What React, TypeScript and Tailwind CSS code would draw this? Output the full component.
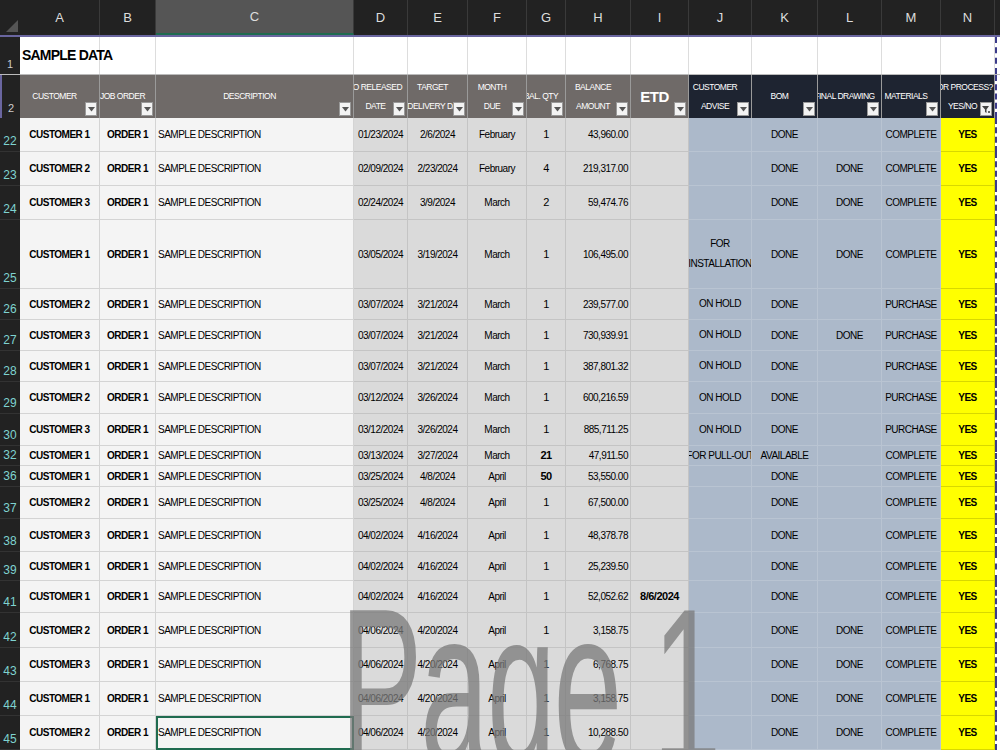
import React from "react";

const cols = "grid grid-cols-[20px_80px_56px_198px_54px_60px_59px_39px_65px_58px_63px_66px_64px_59px_54px_5px]";

type R = [string, number, string, string, string, string, string, string, string, string, string, string, string, string];
const rows: R[] = [
  ["22", 34, "CUSTOMER 1", "ORDER 1", "01/23/2024", "2/6/2024", "February", "1", "43,960.00", "", "", "DONE", "", "COMPLETE"],
  ["23", 34, "CUSTOMER 2", "ORDER 1", "02/09/2024", "2/23/2024", "February", "4", "219,317.00", "", "", "DONE", "DONE", "COMPLETE"],
  ["24", 34, "CUSTOMER 3", "ORDER 1", "02/24/2024", "3/9/2024", "March", "2", "59,474.76", "", "", "DONE", "DONE", "COMPLETE"],
  ["25", 69, "CUSTOMER 1", "ORDER 1", "03/05/2024", "3/19/2024", "March", "1", "106,495.00", "", "FOR\nINSTALLATION", "DONE", "DONE", "COMPLETE"],
  ["26", 31, "CUSTOMER 2", "ORDER 1", "03/07/2024", "3/21/2024", "March", "1", "239,577.00", "", "ON HOLD", "DONE", "", "PURCHASE"],
  ["27", 31, "CUSTOMER 3", "ORDER 1", "03/07/2024", "3/21/2024", "March", "1", "730,939.91", "", "ON HOLD", "DONE", "DONE", "PURCHASE"],
  ["28", 31, "CUSTOMER 1", "ORDER 1", "03/07/2024", "3/21/2024", "March", "1", "387,801.32", "", "ON HOLD", "DONE", "", "PURCHASE"],
  ["29", 32, "CUSTOMER 2", "ORDER 1", "03/12/2024", "3/26/2024", "March", "1", "600,216.59", "", "ON HOLD", "DONE", "", "PURCHASE"],
  ["30", 32, "CUSTOMER 3", "ORDER 1", "03/12/2024", "3/26/2024", "March", "1", "885,711.25", "", "ON HOLD", "DONE", "", "PURCHASE"],
  ["32", 20, "CUSTOMER 1", "ORDER 1", "03/13/2024", "3/27/2024", "March", "21", "47,911.50", "", "FOR PULL-OUT", "AVAILABLE", "", "COMPLETE"],
  ["36", 21, "CUSTOMER 1", "ORDER 1", "03/25/2024", "4/8/2024", "April", "50", "53,550.00", "", "", "DONE", "", "COMPLETE"],
  ["37", 32, "CUSTOMER 2", "ORDER 1", "03/25/2024", "4/8/2024", "April", "1", "67,500.00", "", "", "DONE", "", "COMPLETE"],
  ["38", 33, "CUSTOMER 3", "ORDER 1", "04/02/2024", "4/16/2024", "April", "1", "48,378.78", "", "", "DONE", "", "COMPLETE"],
  ["39", 29, "CUSTOMER 1", "ORDER 1", "04/02/2024", "4/16/2024", "April", "1", "25,239.50", "", "", "DONE", "", "COMPLETE"],
  ["41", 32, "CUSTOMER 1", "ORDER 1", "04/02/2024", "4/16/2024", "April", "1", "52,052.62", "8/6/2024", "", "DONE", "", "COMPLETE"],
  ["42", 35, "CUSTOMER 2", "ORDER 1", "04/06/2024", "4/20/2024", "April", "1", "3,158.75", "", "", "DONE", "DONE", "COMPLETE"],
  ["43", 34, "CUSTOMER 3", "ORDER 1", "04/06/2024", "4/20/2024", "April", "1", "6,768.75", "", "", "DONE", "DONE", "COMPLETE"],
  ["44", 34, "CUSTOMER 1", "ORDER 1", "04/06/2024", "4/20/2024", "April", "1", "3,158.75", "", "", "DONE", "DONE", "COMPLETE"],
  ["45", 34, "CUSTOMER 2", "ORDER 1", "04/06/2024", "4/20/2024", "April", "1", "10,288.50", "", "", "DONE", "DONE", "COMPLETE"],
];

const Dd = ({ filter }: { filter?: boolean }) => (
  <span className="absolute right-[2px] bottom-[2px] w-[12px] h-[14px] bg-[#f3f3f3] border border-[#999] flex items-center justify-center">
    {filter ? (
      <svg width="9" height="9" viewBox="0 0 9 9"><path d="M0 1h7L4.5 4.5V8L3 7V4.5z" fill="#444" /><path d="M6 6l2 2M8 6l-2 2" stroke="#444" strokeWidth="0.8" /></svg>
    ) : (
      <svg width="7" height="5" viewBox="0 0 7 5"><path d="M0 0h7L3.5 4.5z" fill="#555" /></svg>
    )}
  </span>
);

const H = ({ t, bg, big, filter }: { t: React.ReactNode; bg: string; big?: boolean; filter?: boolean }) => (
  <div className={`relative ${bg} border-r border-[#9a9a9a] text-white flex items-center justify-center text-center leading-[19px] ${big ? "text-[15px] font-bold" : "text-[8.5px]"} tracking-[-0.5px] pr-[10px] overflow-hidden whitespace-nowrap`}>
    {t}
    <Dd filter={filter} />
  </div>
);

export default function App() {
  const letters = ["A", "B", "C", "D", "E", "F", "G", "H", "I", "J", "K", "L", "M", "N"];
  return (
    <div className="relative w-[1000px] h-[750px] overflow-hidden bg-[#222] text-black" style={{ fontFamily: "'Liberation Sans', Arial, sans-serif" }}>
      <div className={`${cols} h-[37px] bg-[#222] border-b-2 border-[#6a66a0]`}>
        <div className="relative"><span className="absolute right-[2px] bottom-[3px] w-0 h-0 border-l-[12px] border-l-transparent border-b-[12px] border-b-[#555]" /></div>
        {letters.map((l) => (
          <div key={l} className={`flex items-center justify-center text-[13px] text-[#ddd] border-r border-[#3a3a3a] ${l === "C" ? "bg-[#555] border-b-2 border-b-[#1f6b4f]" : ""}`}>{l}</div>
        ))}
        <div />
      </div>
      <div className={`${cols} h-[37px] bg-white`}>
        <div className="bg-[#222] text-[#ccc] text-[11px] flex items-end justify-center pb-[2px]">1</div>
        <div className="flex items-center text-[14px] font-bold tracking-[-0.8px] pl-[2px] border-r border-[#ddd] whitespace-nowrap">SAMPLE DATA</div>
        <div className="border-r border-[#ddd]" />
        <div className="border-r border-[#ddd]" />
        {Array.from({ length: 11 }).map((_, i) => <div key={i} className="border-r border-[#ddd]" />)}
        <div className="border-l-2 border-dashed border-[#3b3b8a]" />
      </div>
      <div className={`${cols} h-[44px] border-t border-[#bbb]`}>
        <div className="bg-[#222] text-[#ccc] text-[11px] flex items-end justify-center pb-[2px] border-l-2 border-[#6a66a0]">2</div>
        <H t="CUSTOMER" bg="bg-[#6f6a68]" />
        <H t="JOB ORDER" bg="bg-[#6f6a68]" />
        <H t="DESCRIPTION" bg="bg-[#6f6a68]" />
        <H t={<span>JO RELEASED<br />DATE</span>} bg="bg-[#6f6a68]" />
        <H t={<span>TARGET<br />DELIVERY DA</span>} bg="bg-[#6f6a68]" />
        <H t={<span>MONTH<br />DUE</span>} bg="bg-[#6f6a68]" />
        <H t="BAL. QTY" bg="bg-[#6f6a68]" />
        <H t={<span>BALANCE<br />AMOUNT</span>} bg="bg-[#6f6a68]" />
        <H t="ETD" bg="bg-[#6f6a68]" big />
        <H t={<span>CUSTOMER<br />ADVISE</span>} bg="bg-[#1e2431]" />
        <H t="BOM" bg="bg-[#1e2431]" />
        <H t="FINAL DRAWING" bg="bg-[#1e2431]" />
        <H t="MATERIALS" bg="bg-[#1e2431]" />
        <H t={<span>FOR PROCESS?<br />YES/NO</span>} bg="bg-[#1e2431]" filter />
        <div className="bg-white border-l-2 border-dashed border-[#3b3b8a]" />
      </div>
      {rows.map((r) => {
        const [num, h, cust, jo, d, e, f, g, hh, i, j, k, l, m] = r;
        const c = "flex items-center text-[10px] tracking-[-0.5px] whitespace-nowrap border-r border-b overflow-hidden";
        return (
          <div key={num} className={cols} style={{ height: h }}>
            <div className="bg-[#222] text-[#7fd3d0] text-[12px] flex items-end justify-center pb-[1px] border-b border-[#333]">{num}</div>
            <div className={`${c} bg-[#f4f4f4] border-[#d4d4d4] justify-center font-bold`}>{cust}</div>
            <div className={`${c} bg-[#f4f4f4] border-[#d4d4d4] justify-center font-bold`}>{jo}</div>
            <div className={`${c} bg-[#f4f4f4] border-[#d4d4d4] pl-[2px] text-[9px] ${num === "45" ? "outline-2 outline-[#1f6b4f] -outline-offset-2" : ""}`}>SAMPLE DESCRIPTION</div>
            <div className={`${c} bg-[#dadada] border-[#c4c4c4] justify-center text-[10.5px]`}>{d}</div>
            <div className={`${c} bg-[#dadada] border-[#c4c4c4] justify-center text-[10.5px]`}>{e}</div>
            <div className={`${c} bg-[#dadada] border-[#c4c4c4] justify-center text-[10.5px]`}>{f}</div>
            <div className={`${c} bg-[#dadada] border-[#c4c4c4] justify-center text-[11px] ${g.length > 1 ? "font-bold" : ""}`}>{g}</div>
            <div className={`${c} bg-[#dadada] border-[#c4c4c4] justify-end pr-[2px] text-[10.5px]`}>{hh}</div>
            <div className={`${c} bg-[#dadada] border-[#c4c4c4] justify-center text-[11px] font-bold`}>{i}</div>
            <div className={`${c} bg-[#acb9ca] border-[#b9c4d2] justify-center text-center text-[8.5px] whitespace-pre leading-[20px]`}>{j}</div>
            <div className={`${c} bg-[#acb9ca] border-[#b9c4d2] justify-center text-[9px]`}>{k}</div>
            <div className={`${c} bg-[#acb9ca] border-[#b9c4d2] justify-center text-[9px]`}>{l}</div>
            <div className={`${c} bg-[#acb9ca] border-[#b9c4d2] justify-center text-[9px]`}>{m}</div>
            <div className={`${c} bg-[#ffff00] border-[#d8d800] justify-center text-[9px] font-bold`}>YES</div>
            <div className="bg-white border-l-2 border-dashed border-[#3b3b8a]" />
          </div>
        );
      })}
      <div className="absolute left-[340px] top-[575px] text-[225px] leading-none text-[#7a7a7a]/75 pointer-events-none tracking-[-4px] origin-left scale-x-[0.55] whitespace-nowrap" style={{ fontFamily: "'Liberation Sans', Arial, sans-serif" }}>Page 1</div>
    </div>
  );
}
